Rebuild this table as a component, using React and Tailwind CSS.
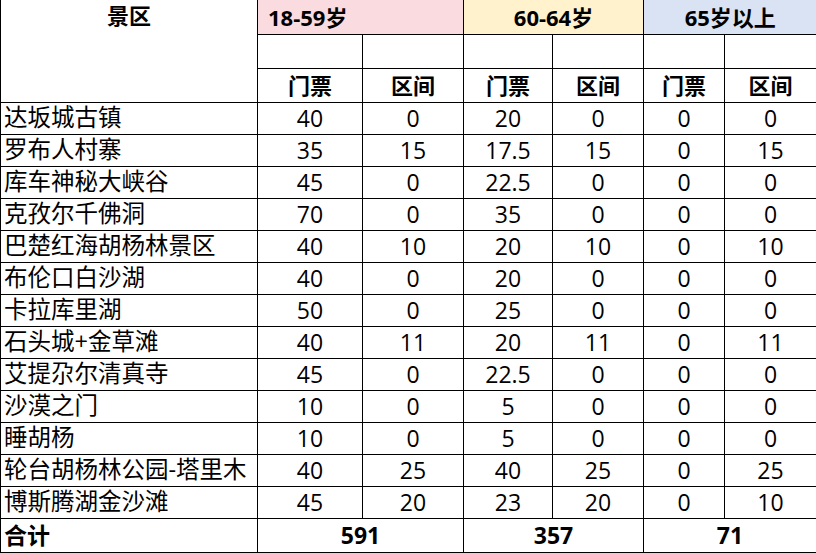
import React from 'react';

const rows = [
  ['达坂城古镇', '40', '0', '20', '0', '0', '0'],
  ['罗布人村寨', '35', '15', '17.5', '15', '0', '15'],
  ['库车神秘大峡谷', '45', '0', '22.5', '0', '0', '0'],
  ['克孜尔千佛洞', '70', '0', '35', '0', '0', '0'],
  ['巴楚红海胡杨林景区', '40', '10', '20', '10', '0', '10'],
  ['布伦口白沙湖', '40', '0', '20', '0', '0', '0'],
  ['卡拉库里湖', '50', '0', '25', '0', '0', '0'],
  ['石头城+金草滩', '40', '11', '20', '11', '0', '11'],
  ['艾提尕尔清真寺', '45', '0', '22.5', '0', '0', '0'],
  ['沙漠之门', '10', '0', '5', '0', '0', '0'],
  ['睡胡杨', '10', '0', '5', '0', '0', '0'],
  ['轮台胡杨林公园-塔里木', '40', '25', '40', '25', '0', '25'],
  ['博斯腾湖金沙滩', '45', '20', '23', '20', '0', '10'],
];

const font = { fontFamily: '"Open Sans", "Noto Sans CJK SC", sans-serif' };

export default function App() {
  const cell = 'border border-black p-0 text-center';
  return (
    <div className="w-[816px] h-[553px] bg-white overflow-hidden" style={font}>
      <table className="table-fixed border-collapse w-[816px] text-[22px] text-black leading-none">
        <colgroup>
          <col className="w-[257px]" />
          <col className="w-[105px]" />
          <col className="w-[101px]" />
          <col className="w-[89px]" />
          <col className="w-[91px]" />
          <col className="w-[81px]" />
          <col className="w-[92px]" />
        </colgroup>
        <tbody>
          <tr className="h-[34px]">
            <td rowSpan={3} className="border-x border-b border-black align-top text-center font-bold pt-[4px]">
              景区
            </td>
            <td colSpan={2} className="border-x border-b border-black bg-[#fadbe0] font-bold text-left pl-[10px]">
              18-59岁
            </td>
            <td colSpan={2} className="border-x border-b border-black bg-[#fff2cc] font-bold text-center">
              60-64岁
            </td>
            <td colSpan={2} className="border-l border-b border-black bg-[#dae3f3] font-bold text-center">
              65岁以上
            </td>
          </tr>
          <tr className="h-[34px]">
            <td className={cell}></td>
            <td className={cell}></td>
            <td className={cell}></td>
            <td className={cell}></td>
            <td className={cell}></td>
            <td className={cell}></td>
          </tr>
          <tr className="h-[34px]">
            {['门票', '区间', '门票', '区间', '门票', '区间'].map((t, i) => (
              <td key={i} className={cell + ' font-bold'}>{t}</td>
            ))}
          </tr>
          {rows.map((r) => (
            <tr key={r[0]} className="h-[32px]">
              <td className="border border-black text-left pl-[3px] text-[23.5px]">{r[0]}</td>
              {r.slice(1).map((v, i) => (
                <td key={i} className={cell + ' text-[23px]'}>{v}</td>
              ))}
            </tr>
          ))}
          <tr className="h-[34px]">
            <td className="border border-black text-left pl-[3px] font-bold text-[23px]">合计</td>
            <td colSpan={2} className={cell + ' font-bold text-[23px]'}>591</td>
            <td colSpan={2} className={cell + ' font-bold text-[23px]'}>357</td>
            <td colSpan={2} className={cell + ' font-bold text-[23px]'}>71</td>
          </tr>
        </tbody>
      </table>
    </div>
  );
}
